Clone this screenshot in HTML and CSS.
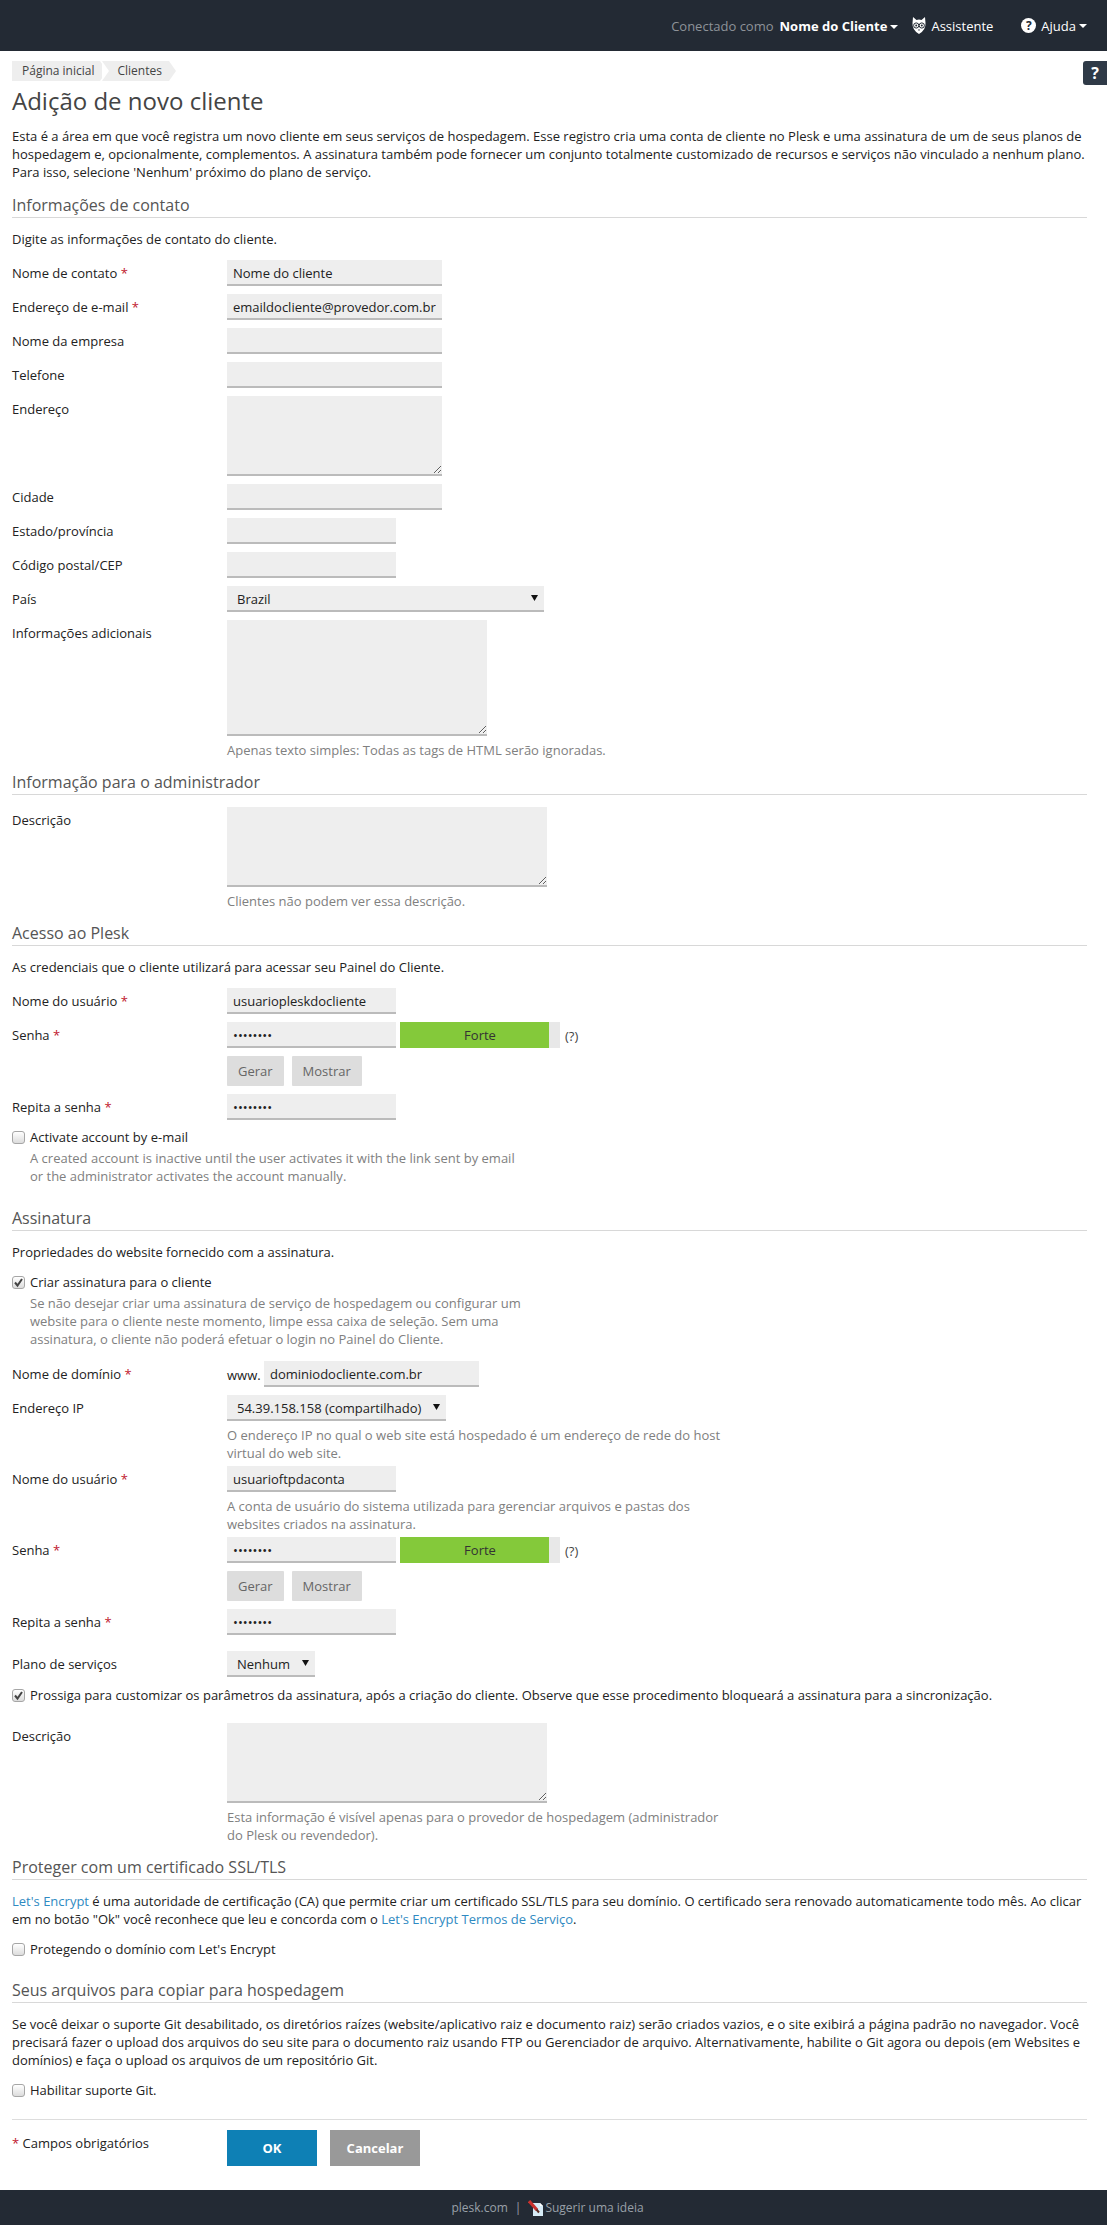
FILE: index.html
```html
<!DOCTYPE html>
<html lang="pt-BR">
<head>
<meta charset="utf-8">
<title>Adição de novo cliente</title>
<link rel="stylesheet" href="styles.css">
</head>
<body>
<header class="topbar">
  <span class="muted-top">Conectado como</span>
  <span class="user">Nome do Cliente<i class="caret"></i></span>
  <span class="assist">
    <svg class="owl" width="14" height="17" viewBox="0 0 14 17"><path d="M1 0L4.500 3Q7 2.200 9.500 3L13 0L13.500 6Q14 13 7 17Q0 13 .5 6Z" fill="#fff"/><circle cx="4.200" cy="8.500" r="2.600" fill="#fff" stroke="#232a34" stroke-width="1"/><circle cx="9.800" cy="8.500" r="2.600" fill="#fff" stroke="#232a34" stroke-width="1"/><circle cx="4.200" cy="8.500" r="1" fill="#232a34"/><circle cx="9.800" cy="8.500" r="1" fill="#232a34"/><path d="M6 12.500L7 14L8 12.500Z" fill="#232a34"/></svg>
    Assistente
  </span>
  <span class="help"><span class="qmark">?</span>Ajuda<i class="caret"></i></span>
</header>

<div class="help-tab">?</div>

<main class="page">
  <nav class="crumbs">
    <span class="crumb first">Página inicial</span><span class="crumb">Clientes</span>
  </nav>
  <h1>Adição de novo cliente</h1>
  <p class="intro">Esta é a área em que você registra um novo cliente em seus serviços de hospedagem. Esse registro cria uma conta de cliente no Plesk e uma assinatura de um de seus planos de hospedagem e, opcionalmente, complementos. A assinatura também pode fornecer um conjunto totalmente customizado de recursos e serviços não vinculado a nenhum plano. Para isso, selecione 'Nenhum' próximo do plano de serviço.</p>

  <h2>Informações de contato</h2>
  <p class="lead">Digite as informações de contato do cliente.</p>
  <div class="row"><label class="lbl">Nome de contato <b>*</b></label><input class="w-md" value="Nome do cliente"></div>
  <div class="row"><label class="lbl">Endereço de e-mail <b>*</b></label><input class="w-md" value="emaildocliente@provedor.com.br"></div>
  <div class="row"><label class="lbl">Nome da empresa</label><input class="w-md"></div>
  <div class="row"><label class="lbl">Telefone</label><input class="w-md"></div>
  <div class="row"><label class="lbl">Endereço</label><textarea class="w-md"></textarea></div>
  <div class="row"><label class="lbl">Cidade</label><input class="w-md"></div>
  <div class="row"><label class="lbl">Estado/província</label><input class="w-sm"></div>
  <div class="row"><label class="lbl">Código postal/CEP</label><input class="w-sm"></div>
  <div class="row"><label class="lbl">País</label><select class="w-country"><option>Brazil</option></select></div>
  <div class="row tight"><label class="lbl">Informações adicionais</label>
    <div class="field"><textarea class="w-notes tall"></textarea><div class="hint">Apenas texto simples: Todas as tags de HTML serão ignoradas.</div></div></div>

  <h2>Informação para o administrador</h2>
  <div class="row tight"><label class="lbl">Descrição</label>
    <div class="field"><textarea class="w-lg"></textarea><div class="hint">Clientes não podem ver essa descrição.</div></div></div>

  <h2>Acesso ao Plesk</h2>
  <p class="lead">As credenciais que o cliente utilizará para acessar seu Painel do Cliente.</p>
  <div class="row"><label class="lbl">Nome do usuário <b>*</b></label><input class="w-sm" value="usuariopleskdocliente"></div>
  <div class="row"><label class="lbl">Senha <b>*</b></label>
    <div class="field">
      <div class="pw"><input class="w-sm" type="password" value="12345678"><div class="meter">Forte</div><span class="q">(?)</span></div>
      <div class="btns"><button type="button">Gerar</button><button type="button">Mostrar</button></div>
    </div></div>
  <div class="row"><label class="lbl">Repita a senha <b>*</b></label><input class="w-sm" type="password" value="12345678"></div>
  <div class="check"><input type="checkbox"><div><div class="check-label">Activate account by e-mail</div><div class="hint narrow">A created account is inactive until the user activates it with the link sent by email<br>or the administrator activates the account manually.</div></div></div>

  <h2 class="s-sub">Assinatura</h2>
  <p class="lead">Propriedades do website fornecido com a assinatura.</p>
  <div class="check"><input type="checkbox" checked><div><div class="check-label">Criar assinatura para o cliente</div><div class="hint narrow">Se não desejar criar uma assinatura de serviço de hospedagem ou configurar um<br>website para o cliente neste momento, limpe essa caixa de seleção. Sem uma<br>assinatura, o cliente não poderá efetuar o login no Painel do Cliente.</div></div></div>
  <div class="row dom"><label class="lbl">Nome de domínio <b>*</b></label><span class="www">www.</span><input class="w-dom" value="dominiodocliente.com.br"></div>
  <div class="row after-hint"><label class="lbl">Endereço IP</label><div class="field"><select class="w-ip"><option>54.39.158.158 (compartilhado)</option></select><div class="hint">O endereço IP no qual o web site está hospedado é um endereço de rede do host<br>virtual do web site.</div></div></div>
  <div class="row after-hint"><label class="lbl">Nome do usuário <b>*</b></label><div class="field"><input class="w-sm" value="usuarioftpdaconta"><div class="hint">A conta de usuário do sistema utilizada para gerenciar arquivos e pastas dos<br>websites criados na assinatura.</div></div></div>
  <div class="row"><label class="lbl">Senha <b>*</b></label>
    <div class="field">
      <div class="pw"><input class="w-sm" type="password" value="12345678"><div class="meter">Forte</div><span class="q">(?)</span></div>
      <div class="btns"><button type="button">Gerar</button><button type="button">Mostrar</button></div>
    </div></div>
  <div class="row plan-gap"><label class="lbl">Repita a senha <b>*</b></label><input class="w-sm" type="password" value="12345678"></div>
  <div class="row"><label class="lbl">Plano de serviços</label><select class="w-plan"><option>Nenhum</option></select></div>
  <div class="check c-custom"><input type="checkbox" checked><div class="check-label">Prossiga para customizar os parâmetros da assinatura, após a criação do cliente. Observe que esse procedimento bloqueará a assinatura para a sincronização.</div></div>
  <div class="row tight"><label class="lbl">Descrição</label>
    <div class="field"><textarea class="w-lg"></textarea><div class="hint">Esta informação é visível apenas para o provedor de hospedagem (administrador<br>do Plesk ou revendedor).</div></div></div>

  <h2>Proteger com um certificado SSL/TLS</h2>
  <p class="lead"><a>Let's Encrypt</a> é uma autoridade de certificação (CA) que permite criar um certificado SSL/TLS para seu domínio. O certificado sera renovado automaticamente todo mês. Ao clicar em no botão "Ok" você reconhece que leu e concorda com o <a>Let's Encrypt Termos de Serviço</a>.</p>
  <div class="check"><input type="checkbox"><div class="check-label">Protegendo o domínio com Let's Encrypt</div></div>

  <h2 class="s-git">Seus arquivos para copiar para hospedagem</h2>
  <p class="lead">Se você deixar o suporte Git desabilitado, os diretórios raízes (website/aplicativo raiz e documento raiz) serão criados vazios, e o site exibirá a página padrão no navegador. Você precisará fazer o upload dos arquivos do seu site para o documento raiz usando FTP ou Gerenciador de arquivo. Alternativamente, habilite o Git agora ou depois (em Websites e domínios) e faça o upload os arquivos de um repositório Git.</p>
  <div class="check"><input type="checkbox"><div class="check-label">Habilitar suporte Git.</div></div>

  <div class="actions">
    <div class="req"><b>*</b> Campos obrigatórios</div>
    <button type="button" class="ok">OK</button><button type="button" class="cancel">Cancelar</button>
  </div>
</main>

<footer class="foot">
  <span>plesk.com</span><span class="sep">|</span>
  <svg class="idea" width="15" height="16" viewBox="0 0 15 16"><path d="M5 3H12L15 6V16H5Z" fill="#d6ebf6"/><path d="M12 3V6H15Z" fill="#fff"/><path d="M1 1L9 10" stroke="#c9302c" stroke-width="3.200"/><path d="M8.500 9.500L11 12.500" stroke="#5b2a20" stroke-width="2"/></svg>
  <span>Sugerir uma ideia</span>
</footer>
</body>
</html>
```

FILE: styles.css
```css
* { box-sizing: border-box; }
html, body { margin: 0; padding: 0; }
body { font: 13px/18px "Open Sans", sans-serif; color: #222; background: #fff; width: 1107px; position: relative; }

.topbar { height: 51px; background: #232a34; color: #fff; display: flex; align-items: center; justify-content: flex-end; padding: 0 20px 0 0; font-size: 13px; }
.muted-top { color: #8e9399; margin-right: 6px; }
.user { font-weight: 700; margin-right: 14px; }
.caret { display: inline-block; width: 0; height: 0; margin-left: 3px; vertical-align: 2px; border: 4px solid transparent; border-top-color: #fff; border-bottom: 0; }
.assist { display: flex; align-items: center; gap: 5px; margin-right: 28px; }
.help { display: flex; align-items: center; }
.help .caret { margin-left: 3px; }
.qmark { width: 15px; height: 15px; border-radius: 50%; background: #fff; color: #232a34; font-weight: 700; font-size: 12px; line-height: 15px; text-align: center; margin-right: 5px; }

.help-tab { position: absolute; top: 61px; right: 0; width: 24px; height: 24px; background: #2f3a47; color: #fff; font-weight: 700; font-size: 16px; line-height: 24px; text-align: center; border-radius: 3px 0 0 3px; }

.page { padding: 10px 20px 24px 12px; }

.crumbs { display: flex; height: 20px; }
.crumb { position: relative; display: block; height: 20px; line-height: 20px; background: #eee; padding: 0 7px 0 15px; font-size: 12px; color: #444; margin-right: 2px; }
.crumb.first { padding-left: 10px; padding-right: 6px; }
.crumb::after { content: ""; position: absolute; top: 0; left: 100%; border-left: 7px solid #eee; border-top: 10px solid transparent; border-bottom: 10px solid transparent; }
.crumb::before { content: ""; position: absolute; top: 0; left: 0; border-left: 7px solid #fff; border-top: 10px solid transparent; border-bottom: 10px solid transparent; }
.crumb.first::before { display: none; }

h1 { font-size: 24px; font-weight: 400; line-height: 30px; margin: 5px 0 11px; color: #444; }
.intro { margin: 0 0 13px; }
h2 { font-size: 16px; font-weight: 400; line-height: 22px; margin: 12px 0; padding-bottom: 1px; border-bottom: 1px solid #d8d8d8; color: #555; }
.s-sub { margin-top: 22px; }
.s-git { margin-top: 21px; }
.lead { margin: 12px 0; }
.lead a { color: #2f8ac2; }

.row { display: flex; align-items: flex-start; margin-bottom: 8px; }
.lbl { flex: 0 0 215px; padding-top: 4px; }
.lbl b, .req b { color: #c0172d; font-weight: 400; }
input:not([type=checkbox]), textarea, select { display: block; font: 13px "Open Sans", sans-serif; color: #222; background: #eee; border: 0; border-bottom: 2px solid #bbb; border-radius: 0; height: 26px; padding: 2px 6px 0; margin: 0; outline: 0; }
textarea { height: 80px; resize: both; }
textarea.tall { height: 116px; }
select { appearance: none; padding: 2px 0 0 10px; background: #eee url("data:image/svg+xml,%3Csvg xmlns='http://www.w3.org/2000/svg' width='7' height='6'%3E%3Cpath d='M0 0h7L3.500 6z' fill='%23111'/%3E%3C/svg%3E") no-repeat right 6px center; }
.w-md { width: 215px; }
.w-sm { width: 169px; }
.w-lg { width: 320px; }
.w-notes { width: 260px; }
.w-country { width: 317px; }
.w-ip { width: 219px; }
.w-plan { width: 88px; }
.w-dom { width: 215px; }
.www { width: 37px; padding-top: 5px; }

.hint { color: #808080; margin-top: 5px; }
.hint.narrow { margin-top: 3px; }
.tight { margin-bottom: 0; }
.after-hint { margin-bottom: 4px; }
.dom { margin-top: 13px; }
.plan-gap { margin-bottom: 16px; }

.pw { display: flex; align-items: flex-start; }
.meter { width: 160px; height: 26px; margin-left: 4px; background: linear-gradient(to right, #84c93a 149px, #e8e8e8 149px); text-align: center; line-height: 26px; color: #333; }
.q { margin-left: 5px; padding-top: 5px; color: #444; }
.btns { display: flex; gap: 8px; margin-top: 8px; }
.btns button { height: 30px; padding: 0 11px; border: 0; border-radius: 1px; background: #ddd; color: #666; font: 13px "Open Sans", sans-serif; }

.check { display: flex; gap: 5px; margin: 0; }
.check input { appearance: none; flex: none; width: 13px; height: 13px; margin: 3px 0 0; border: 1px solid #a6a6a6; border-radius: 3px; background: linear-gradient(#fff, #dcdcdc); }
.check input:checked { background: url("data:image/svg+xml,%3Csvg xmlns='http://www.w3.org/2000/svg' width='11' height='11'%3E%3Cpath d='M2 5.500L4.500 8.500L9 2' fill='none' stroke='%23444' stroke-width='2'/%3E%3C/svg%3E") center no-repeat, linear-gradient(#fff, #dcdcdc); }
.c-custom { margin: 9px 0 19px; }

.actions { display: flex; border-top: 1px solid #ddd; padding-top: 10px; margin-top: 20px; }
.req { flex: 0 0 215px; padding-top: 4px; }
.actions button { width: 90px; height: 36px; border: 0; font: 700 13px "Open Sans", sans-serif; color: #fff; }
.ok { background: #0e80b5; margin-right: 13px; }
.cancel { background: #999; }

.foot { height: 35px; background: #232a34; color: #99a0a8; font-size: 12px; display: flex; align-items: center; justify-content: center; padding-right: 12px; }
.sep { margin: 0 7px; }
.idea { margin-right: 2px; }
```
